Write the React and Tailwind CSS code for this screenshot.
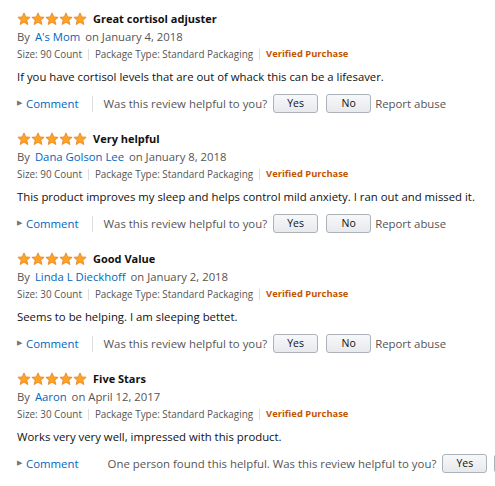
import React from "react";

const reviews = [
  { title: "Great cortisol adjuster", author: "A's Mom", date: "January 4, 2018", size: "90 Count", body: "If you have cortisol levels that are out of whack this can be a lifesaver." },
  { title: "Very helpful", author: "Dana Golson Lee", date: "January 8, 2018", size: "90 Count", body: "This product improves my sleep and helps control mild anxiety. I ran out and missed it." },
  { title: "Good Value", author: "Linda L Dieckhoff", date: "January 2, 2018", size: "30 Count", body: "Seems to be helping. I am sleeping bettet." },
  { title: "Five Stars", author: "Aaron", date: "April 12, 2017", size: "30 Count", body: "Works very very well, impressed with this product.", found: true },
];

function Star() {
  return (
    <svg width="14" height="14" viewBox="0 0 24 24">
      <path d="M12 1.5l3.1 6.9 7.4.7-5.6 5 1.7 7.4L12 17.6l-6.6 3.9 1.7-7.4-5.6-5 7.4-.7z" fill="#ffa41c" stroke="#de7921" strokeWidth="1.2" strokeLinejoin="round" />
    </svg>
  );
}

function Btn({ children }) {
  return (
    <div className="shrink-0 w-[45px] h-[19px] flex items-center justify-center rounded-[3px] border border-[#adb1b8] bg-gradient-to-b from-[#f7f8fa] to-[#e7e9ec] text-[10.5px] text-[#111]">
      {children}
    </div>
  );
}

function Review({ r }) {
  return (
    <div className="h-[120px] pt-[10px]">
      <div className="flex items-center h-[16px]">
        <div className="flex">
          <Star /><Star /><Star /><Star /><Star />
        </div>
        <span className="ml-[6px] text-[11px] font-bold text-[#111]">{r.title}</span>
      </div>
      <div className="mt-[1px] h-[18px] flex items-center text-[11.3px] text-[#555] whitespace-pre">
        {"By "}<span className="text-[#0066c0] mx-[2px]">{r.author}</span>{" on " + r.date}
      </div>
      <div className="h-[17px] flex items-center text-[9.9px] text-[#555]">
        <span>Size: {r.size}</span>
        <span className="mx-[6px] w-px h-[11px] bg-[#ddd]"></span>
        <span>Package Type: Standard Packaging</span>
        <span className="mx-[6px] w-px h-[11px] bg-[#ddd]"></span>
        <span className="font-bold text-[9.4px] text-[#c45500]">Verified Purchase</span>
      </div>
      <div className="mt-[5px] h-[18px] flex items-center text-[11.35px] text-[#111] whitespace-nowrap">{r.body}</div>
      <div className="mt-[8px] h-[19px] flex items-center text-[11.4px] whitespace-nowrap">
        <span className="text-[#767676] text-[7px] mr-[4px]">▶</span>
        <span className="text-[#0066c0]">Comment</span>
        <span className="ml-[13px] mr-[11px] w-px h-[16px] bg-[#ddd]"></span>
        {r.found ? (
          <>
            <span className="text-[#555] ml-[5px] mr-[6px]">One person found this helpful. Was this review helpful to you?</span>
            <Btn>Yes</Btn>
            <div className="ml-[7px] shrink-0"><Btn>No</Btn></div>
          </>
        ) : (
          <>
            <span className="text-[#555] mr-[6px]">Was this review helpful to you?</span>
            <Btn>Yes</Btn>
            <div className="ml-[8px]"><Btn>No</Btn></div>
            <span className="ml-[4px] text-[#555]">Report abuse</span>
          </>
        )}
      </div>
    </div>
  );
}

export default function App() {
  return (
    <div className="w-[495px] h-[486px] overflow-hidden bg-white pl-[17px] pt-[1px]" style={{ fontFamily: '"Open Sans", Arial, sans-serif' }}>
      {reviews.map((r, i) => (
        <Review key={i} r={r} />
      ))}
    </div>
  );
}
